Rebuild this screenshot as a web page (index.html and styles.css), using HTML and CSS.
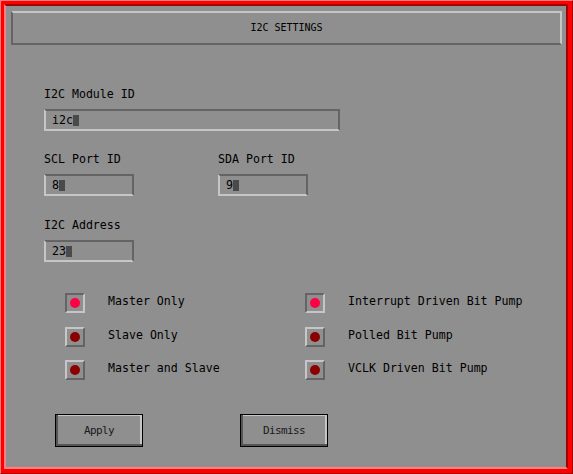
FILE: index.html
```html
<!DOCTYPE html>
<html>
<head>
<meta charset="utf-8">
<link rel="stylesheet" href="styles.css">
</head>
<body>
<div class="window">
  <div class="frame">
    <div class="panel">
      <div class="title">I2C SETTINGS</div>
      <div class="form">
        <div class="group">
          <div class="label">I2C Module ID</div>
          <div class="field field-wide"><span class="value">i2c</span><span class="cursor"></span></div>
        </div>
        <div class="row">
          <div class="group group-half">
            <div class="label">SCL Port ID</div>
            <div class="field field-short"><span class="value">8</span><span class="cursor"></span></div>
          </div>
          <div class="group">
            <div class="label">SDA Port ID</div>
            <div class="field field-short"><span class="value">9</span><span class="cursor"></span></div>
          </div>
        </div>
        <div class="group group-addr">
          <div class="label">I2C Address</div>
          <div class="field field-short"><span class="value">23</span><span class="cursor"></span></div>
        </div>
        <div class="radios">
          <div class="radio-col">
            <div class="radio"><span class="box on"><span class="dot"></span></span><span class="rlabel">Master Only</span></div>
            <div class="radio"><span class="box"><span class="dot"></span></span><span class="rlabel">Slave Only</span></div>
            <div class="radio"><span class="box"><span class="dot"></span></span><span class="rlabel">Master and Slave</span></div>
          </div>
          <div class="radio-col">
            <div class="radio"><span class="box on"><span class="dot"></span></span><span class="rlabel">Interrupt Driven Bit Pump</span></div>
            <div class="radio"><span class="box"><span class="dot"></span></span><span class="rlabel">Polled Bit Pump</span></div>
            <div class="radio"><span class="box"><span class="dot"></span></span><span class="rlabel">VCLK Driven Bit Pump</span></div>
          </div>
        </div>
        <div class="buttons">
          <div class="btn">Apply</div>
          <div class="btn">Dismiss</div>
        </div>
      </div>
    </div>
  </div>
</div>
</body>
</html>
```

FILE: styles.css
```css
html, body {
  margin: 0;
  padding: 0;
  background: #8f8f8f;
}
.window {
  width: 573px;
  height: 474px;
  box-sizing: border-box;
  border: 1px solid;
  border-color: #ff8080 #a00000 #a00000 #ff8080;
  font-family: "DejaVu Sans Mono", monospace;
  font-size: 11.6px;
  color: #000;
}
.frame {
  height: 100%;
  box-sizing: border-box;
  border-style: solid;
  border-color: #ff0000;
  border-width: 3px 4px 4px 3px;
}
.panel {
  height: 100%;
  box-sizing: border-box;
  border: 2px solid;
  border-color: #a00000 #a00000 #ff8080 #ff8080;
  background: #8f8f8f;
  display: flex;
  flex-direction: column;
}
.title {
  margin: 5px 0 0 5px;
  width: 551px;
  height: 34px;
  box-sizing: border-box;
  border: 2px solid;
  border-color: #c6c6c6 #c6c6c6 #646464 #646464;
  font-size: 10px;
  line-height: 30px;
  text-align: center;
  color: #000;
}
.form {
  margin-top: 42px;
  padding-left: 38px;
  display: flex;
  flex-direction: column;
}
.group {
  display: flex;
  flex-direction: column;
  gap: 8px;
}
.row {
  display: flex;
  margin-top: 21px;
}
.group-half {
  width: 174px;
}
.group-addr {
  margin-top: 22px;
}
.label {
  height: 14px;
  line-height: 14px;
  white-space: nowrap;
}
.field {
  height: 22px;
  box-sizing: border-box;
  border: 2px solid;
  border-color: #646464 #646464 #c6c6c6 #c6c6c6;
  padding-left: 6px;
  display: flex;
  align-items: center;
}
.field-wide { width: 296px; }
.field-short { width: 90px; }
.value {
  line-height: 14px;
}
.cursor {
  display: inline-block;
  width: 6px;
  height: 11px;
  background: #4a4a4a;
}
.radios {
  margin-top: 31px;
  margin-left: 21px;
  display: flex;
}
.radio-col {
  width: 240px;
  display: flex;
  flex-direction: column;
  gap: 13.5px;
}
.radio {
  display: flex;
  align-items: flex-start;
  height: 20px;
}
.box {
  width: 20px;
  height: 20px;
  box-sizing: border-box;
  border: 2px solid;
  border-color: #c6c6c6 #646464 #646464 #c6c6c6;
  display: flex;
  align-items: center;
  justify-content: center;
  flex: none;
}
.box.on {
  border-color: #646464 #c6c6c6 #c6c6c6 #646464;
}
.dot {
  width: 10px;
  height: 10px;
  border-radius: 50%;
  background: #8b0000;
}
.box.on .dot {
  background: #ff0044;
}
.rlabel {
  margin-left: 23px;
  margin-top: 1px;
  line-height: 14px;
  white-space: nowrap;
}
.buttons {
  margin-top: 34px;
  margin-left: 11px;
  display: flex;
  gap: 97px;
}
.btn {
  width: 88px;
  height: 33px;
  box-sizing: border-box;
  border: 1px solid #000;
  box-shadow: inset 2px -2px 0 #555555, inset -2px 1px 0 #c6c6c6;
  display: flex;
  align-items: center;
  justify-content: center;
  font-size: 11px;
  letter-spacing: -0.6px;
  color: #1a1a1a;
}
```
